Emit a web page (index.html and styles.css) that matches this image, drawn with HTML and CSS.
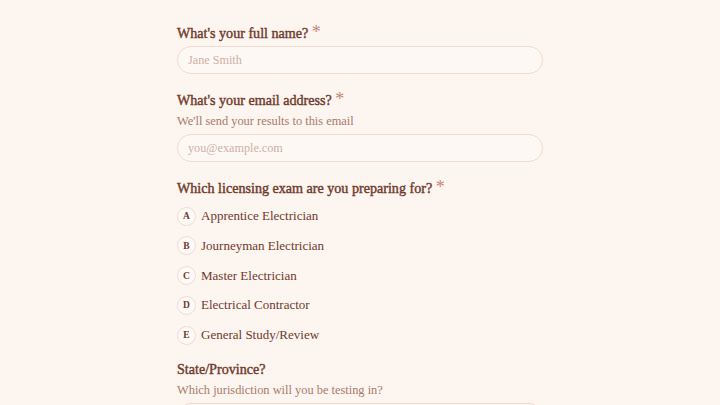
FILE: index.html
```html
<!DOCTYPE html>
<html lang="en">
<head>
<meta charset="utf-8">
<title>Licensing exam form</title>
<link rel="stylesheet" href="styles.css">
</head>
<body>
<main class="form">
  <div class="field">
    <label class="label" for="name">What's your full name? <span class="req">*</span></label>
    <input class="input" id="name" type="text" placeholder="Jane Smith">
  </div>
  <div class="field">
    <label class="label" for="email">What's your email address? <span class="req">*</span></label>
    <p class="desc">We'll send your results to this email</p>
    <input class="input" id="email" type="email" placeholder="you@example.com">
  </div>
  <div class="field choice">
    <p class="label">Which licensing exam are you preparing for? <span class="req">*</span></p>
    <ul class="options">
      <li class="option"><span class="key">A</span><span class="opt-text">Apprentice Electrician</span></li>
      <li class="option"><span class="key">B</span><span class="opt-text">Journeyman Electrician</span></li>
      <li class="option"><span class="key">C</span><span class="opt-text">Master Electrician</span></li>
      <li class="option"><span class="key">D</span><span class="opt-text">Electrical Contractor</span></li>
      <li class="option"><span class="key">E</span><span class="opt-text">General Study/Review</span></li>
    </ul>
  </div>
  <div class="field">
    <p class="label">State/Province?</p>
    <p class="desc">Which jurisdiction will you be testing in?</p>
    <input class="input" type="text">
  </div>
</main>
</body>
</html>
```
FILE: styles.css
```css
html, body {
  margin: 0;
  padding: 0;
  background: #fdf5f0;
}
body {
  font-family: "Liberation Serif", "DejaVu Serif", serif;
  color: #6e3a2c;
  overflow: hidden;
  height: 405px;
}
.form {
  width: 366px;
  margin: 0 auto;
  padding-top: 23px;
  display: flex;
  flex-direction: column;
  gap: 16px;
}
.field {
  display: flex;
  flex-direction: column;
}
.field.choice {
  margin-bottom: -4px;
}
.label {
  margin: 0 0 3px;
  height: 20px;
  font-size: 14.1px;
  line-height: 20px;
  font-weight: 400;
  -webkit-text-stroke: 0.4px #6e3a2c;
  color: #6e3a2c;
}
.req {
  color: #c08878;
  -webkit-text-stroke: 0;
  font-size: 18px;
  line-height: 0;
  font-weight: 400;
}
.desc {
  margin: 0 0 4px;
  font-size: 12.4px;
  line-height: 17px;
  color: #a87a6c;
}
.input {
  box-sizing: border-box;
  width: 100%;
  height: 28px;
  border: 1.5px solid #eed9cf;
  border-radius: 14px;
  background: #fef8f4;
  padding: 0 10px;
  font-family: inherit;
  font-size: 12.2px;
  color: #6e3a2c;
  outline: none;
}
.input::placeholder {
  color: #cfb0a3;
}
.options {
  list-style: none;
  margin: 3px 0 0;
  padding: 0;
  display: flex;
  flex-direction: column;
  gap: 5.75px;
}
.option {
  display: flex;
  align-items: center;
  gap: 5px;
  height: 24px;
}
.key {
  box-sizing: border-box;
  width: 19px;
  height: 19px;
  border-radius: 50%;
  border: 1.5px solid #eedcd3;
  background: #fef9f6;
  display: flex;
  align-items: center;
  justify-content: center;
  font-size: 9.5px;
  font-weight: 700;
  color: #6e3a2c;
}
.opt-text {
  font-size: 13px;
  color: #6e3a2c;
}
```
